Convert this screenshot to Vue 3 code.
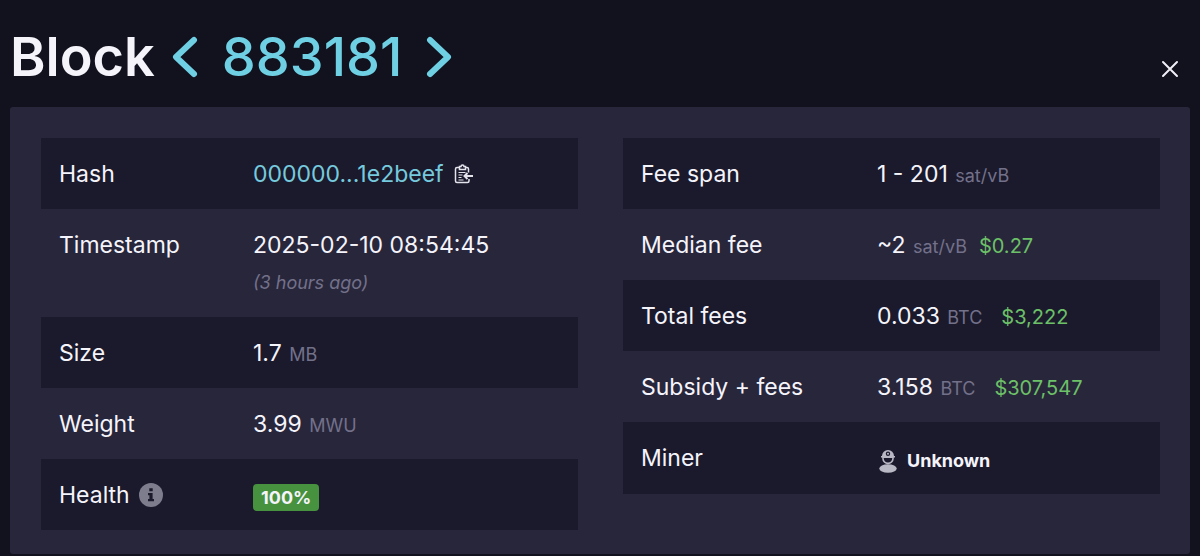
<script setup>
const summary = [
  { label: 'Hash', kind: 'hash', value: '000000...1e2beef' },
  { label: 'Timestamp', kind: 'time', value: '2025-02-10 08:54:45', note: '(3 hours ago)' },
  { label: 'Size', value: '1.7', unit: 'MB' },
  { label: 'Weight', value: '3.99', unit: 'MWU' },
  { label: 'Health', kind: 'health', value: '100%' },
]
const fees = [
  { label: 'Fee span', value: '1 - 201', unit: 'sat/vB' },
  { label: 'Median fee', value: '~2', unit: 'sat/vB', fiat: '$0.27' },
  { label: 'Total fees', value: '0.033', unit: 'BTC', fiat: '$3,222', wide: true },
  { label: 'Subsidy + fees', value: '3.158', unit: 'BTC', fiat: '$307,547', wide: true },
  { label: 'Miner', kind: 'miner', value: 'Unknown' },
]
const tables = [
  { name: 'summary', rows: summary },
  { name: 'fees', rows: fees },
]
</script>

<template>
  <main class="page">
    <header class="head">
      <h1 class="title">Block</h1>
      <nav class="pager" aria-label="Blocks">
        <a href="#previous" class="arrow" aria-label="Previous block">
          <svg width="26" height="42" viewBox="0 0 26 42"><path d="M22 4 4 21l18 17" /></svg>
        </a>
        <a href="#block" class="height">883181</a>
        <a href="#next" class="arrow" aria-label="Next block">
          <svg width="26" height="42" viewBox="0 0 26 42"><path d="m4 4 18 17L4 38" /></svg>
        </a>
      </nav>
      <button class="close" type="button" aria-label="Close">
        <svg width="18" height="18" viewBox="0 0 18 18"><path d="m2 2 14 14M16 2 2 16" /></svg>
      </button>
    </header>

    <section class="panel">
      <table v-for="table in tables" :key="table.name" :class="table.name">
        <tbody>
          <tr v-for="row in table.rows" :key="row.label">
            <th scope="row">
              <span class="label">
                {{ row.label }}
                <svg v-if="row.kind === 'health'" class="info" width="24" height="24" viewBox="0 0 24 24">
                  <circle cx="12" cy="12" r="12" fill="#7e7d8d" />
                  <path d="M10.3 5.2h3.4v3h-3.4zM9 10h4.6v6H15v2.3H9V16h1.4v-3.7H9z" fill="#1b1a2d" />
                </svg>
              </span>
            </th>
            <td>
              <span v-if="row.kind === 'hash'" class="line">
                <a href="#block" class="hash">{{ row.value }}</a>
                <button class="copy" type="button" aria-label="Copy hash">
                  <svg width="20" height="20" viewBox="0 0 20 20">
                    <path d="M5.500 3.500H3a1.500 1.500 0 0 0-1.500 1.500v12A1.500 1.500 0 0 0 3 18.500h10.500A1.500 1.500 0 0 0 15 17v-2M11.500 3.500H13A1.500 1.500 0 0 1 14.500 5v3.500" />
                    <path d="M5.500 5.500v-3h1.500a1.500 1.500 0 0 1 3 0h1.500v3z" />
                    <path class="fine" d="M4.500 8.500h7M4.500 11h4M4.500 13.500h3M4.500 16h5" />
                    <path class="bold" d="M19 12h-8M13.500 9l-3 3 3 3" />
                  </svg>
                </button>
              </span>
              <template v-else-if="row.kind === 'time'">
                <time datetime="2025-02-10T08:54:45">{{ row.value }}</time>
                <i class="note">{{ row.note }}</i>
              </template>
              <span v-else-if="row.kind === 'health'" class="badge">{{ row.value }}</span>
              <span v-else-if="row.kind === 'miner'" class="miner">
                <svg width="20" height="24" viewBox="0 0 20 24">
                  <ellipse cx="10" cy="19.500" rx="8.700" ry="4.300" />
                  <path d="M3 7h1a6 6 0 0 1 12 0h1v1.500h-1.200v1a5.800 5.800 0 0 1-11.600 0v-1H3zM5.700 9c0 6 8.600 6 8.600 0z" fill-rule="evenodd" />
                  <circle cx="10" cy="4.800" r="2.200" fill="#1b1a2d" />
                  <circle cx="10" cy="4.800" r="1" />
                </svg>
                {{ row.value }}
              </span>
              <template v-else>
                {{ row.value }} <span class="unit">{{ row.unit }}</span>
                <span v-if="row.fiat" class="fiat" :class="{ wide: row.wide }">{{ row.fiat }}</span>
              </template>
            </td>
          </tr>
        </tbody>
      </table>
    </section>
  </main>
</template>

<style>
body {
  margin: 0;
  background: #12121f;
}
</style>

<style scoped>
.page {
  font-family: Inter, "Liberation Sans", sans-serif;
  font-size: 23px;
  line-height: 34px;
  color: #f5f4fb;
  padding: 0 10px 3px;
}
.head {
  display: flex;
  align-items: center;
  height: 107px;
  padding-top: 6px;
  box-sizing: border-box;
}
.title {
  margin: 0;
  font-size: 54px;
  line-height: 64px;
  font-weight: 600;
}
.pager {
  display: flex;
  align-items: center;
  gap: 24px;
  margin-left: 17px;
}
a {
  color: #6fd0e4;
  text-decoration: none;
}
.height {
  font-size: 54px;
  line-height: 64px;
  font-weight: 500;
}
.arrow {
  display: flex;
}
.arrow path {
  fill: none;
  stroke: #6fd0e4;
  stroke-width: 6;
  stroke-linecap: round;
  stroke-linejoin: round;
}
button {
  display: flex;
  border: 0;
  padding: 0;
  background: none;
}
.close {
  margin: 24px 11px 0 auto;
}
.close path {
  fill: none;
  stroke: #f0eff6;
  stroke-width: 2;
  stroke-linecap: round;
}
.panel {
  display: grid;
  grid-template-columns: 1fr 1fr;
  align-items: start;
  gap: 45px;
  padding: 31px 30px 24px 31px;
  border-radius: 3px;
  background: #28263b;
}
table {
  width: 100%;
  border-collapse: collapse;
  table-layout: fixed;
}
tr:nth-child(odd) {
  background: #1b1a2d;
}
th,
td {
  padding: 19px 18px 18px;
  text-align: left;
  vertical-align: top;
  font-weight: 400;
}
td {
  padding-right: 0;
}
.summary th {
  width: 158px;
}
.fees th {
  width: 200px;
}
.label,
.line,
.miner {
  display: flex;
  align-items: center;
}
.info {
  margin-left: 9px;
}
.hash {
  color: #76cadd;
}
.copy {
  margin-left: 10px;
}
.copy path {
  fill: none;
  stroke: #e4e3ec;
  stroke-width: 1.5;
}
.copy .fine {
  stroke-width: 1;
}
.copy .bold {
  stroke-width: 2;
}
time,
.note {
  display: block;
}
.note {
  margin-top: 5px;
  font-size: 18px;
  line-height: 32px;
  color: #73718a;
}
.unit {
  margin-left: 1px;
  font-size: 18px;
  line-height: 24px;
  color: #73718a;
}
.fiat {
  margin-left: 12px;
  font-size: 20px;
  line-height: 24px;
  color: #6cc067;
}
.fiat.wide {
  margin-left: 19px;
}
.badge {
  display: block;
  width: fit-content;
  margin-top: 6px;
  padding: 0 8px;
  border-radius: 4px;
  background: #46923e;
  font-size: 18px;
  line-height: 27px;
  font-weight: 700;
}
.miner {
  gap: 9px;
  padding: 4px 0 0 1px;
  font-size: 18px;
  line-height: 31px;
  font-weight: 700;
}
.miner svg {
  fill: #b9b8c5;
}
</style>
